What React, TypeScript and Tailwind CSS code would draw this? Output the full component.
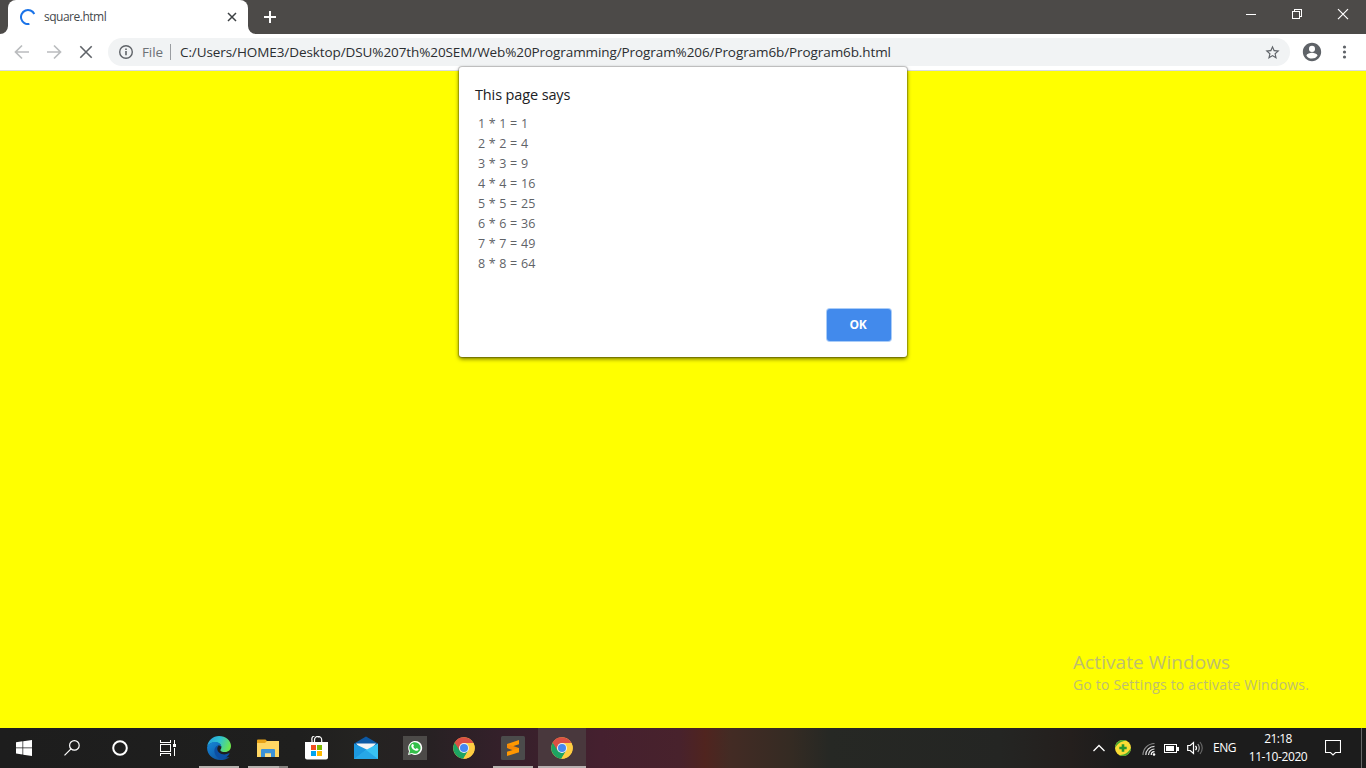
import React from "react";

const rows = ["1 * 1 = 1", "2 * 2 = 4", "3 * 3 = 9", "4 * 4 = 16", "5 * 5 = 25", "6 * 6 = 36", "7 * 7 = 49", "8 * 8 = 64"];

function TabStrip() {
  return (
    <div className="flex h-[34px] shrink-0 items-stretch bg-[#4c4a48]">
      <svg width="8" height="34" className="shrink-0"><path d="M8 26v8H0a8 8 0 0 0 8-8z" fill="#fff" /></svg>
      <div className="flex w-[240px] items-center rounded-t-lg bg-white pr-[11px] pl-[12px]">
        <svg width="16" height="16" viewBox="0 0 16 16" fill="none" stroke="#1a73e8" strokeWidth="2">
          <path d="M14.3 5A7 7 0 1 0 9.4 14.9" />
        </svg>
        <span className="ml-2 text-[12px] leading-4 tracking-[-0.5px] text-[#45494d]">square.html</span>
        <svg width="10" height="10" viewBox="0 0 10 10" className="ml-auto" stroke="#3c4043" strokeWidth="1.5"><path d="M1 1l8 8M9 1l-8 8" /></svg>
      </div>
      <svg width="8" height="34" className="shrink-0"><path d="M0 26v8h8a8 8 0 0 1-8-8z" fill="#fff" /></svg>
      <svg width="28" height="34" stroke="#fff" strokeWidth="2"><path d="M8 17h12M14 11v12" /></svg>
      <div className="ml-auto flex">
        <svg width="46" height="29" shapeRendering="crispEdges"><path d="M18 14h10v1H18z" fill="#fff" /></svg>
        <svg width="46" height="29" fill="none" stroke="#fff" shapeRendering="crispEdges"><path d="M18.5 11.500h7v7h-7zM20.500 11.500v-2h7v7h-2" /></svg>
        <svg width="46" height="29" stroke="#fff" strokeWidth="1.2"><path d="M18 9.200l10 10M28 9.200l-10 10" /></svg>
      </div>
    </div>
  );
}

function Toolbar() {
  return (
    <div className="flex h-[37px] shrink-0 items-center border-b border-[#d9dbdf] bg-white pl-[12px]">
      <svg width="20" height="20" viewBox="0 0 20 20" fill="none" stroke="#babcbe" strokeWidth="1.700"><path d="M17 10H4M10 3.500L3.500 10l6.500 6.500" /></svg>
      <svg width="20" height="20" viewBox="0 0 20 20" fill="none" stroke="#babcbe" strokeWidth="1.700" className="ml-[12px]"><path d="M3 10h13M10 3.500l6.500 6.500-6.500 6.500" /></svg>
      <svg width="20" height="20" viewBox="0 0 20 20" fill="none" stroke="#5f6368" strokeWidth="1.600" className="ml-[12px]"><path d="M4.300 4.300l11.400 11.400M15.700 4.300L4.300 15.700" /></svg>
      <div className="ml-[12px] flex h-7 w-[1182px] items-center rounded-full bg-[#f1f3f4] pl-[10px]">
        <svg width="16" height="16" viewBox="0 0 16 16" fill="none" stroke="#5f6368"><circle cx="8" cy="8" r="6.300" strokeWidth="1.400" /><path d="M8 7v4.200M8 4.500v1.500" strokeWidth="1.600" /></svg>
        <span className="ml-2 w-[21px] text-[13.5px] leading-5 tracking-[-0.1px] whitespace-nowrap text-[#6d7176]">File</span>
        <span className="ml-[7px] h-4 w-px bg-[#9a9da1]" />
        <span className="ml-[9px] text-[13.5px] leading-5 tracking-[-0.088px] whitespace-nowrap text-[#2b2e31]">C:/Users/HOME3/Desktop/DSU%207th%20SEM/Web%20Programming/Program%206/Program6b/Program6b.html</span>
        <svg width="17" height="17" viewBox="0 0 24 24" className="mr-[9.5px] ml-auto" fill="#5f6368"><path d="M22 9.240l-7.190-.62L12 2 9.190 8.630 2 9.240l5.460 4.730L5.820 21 12 17.270 18.180 21l-1.630-7.030L22 9.240zM12 15.400l-3.760 2.270 1-4.280-3.320-2.880 4.380-.38L12 6.100l1.710 4.040 4.380.38-3.320 2.880 1 4.280L12 15.400z" /></svg>
      </div>
      <svg width="22" height="22" viewBox="0 0 24 24" className="ml-[11px]" fill="#5f6368"><path d="M12 2C6.480 2 2 6.480 2 12s4.480 10 10 10 10-4.480 10-10S17.520 2 12 2zm0 3.300a3.300 3.300 0 1 1 0 6.600 3.300 3.300 0 0 1 0-6.600zm0 13.900c-2.500 0-4.710-1.280-6-3.220.03-1.990 4-3.080 6-3.080 1.990 0 5.970 1.090 6 3.080A7.200 7.200 0 0 1 12 19.200z" /></svg>
      <svg width="16" height="20" className="ml-[13px]" fill="#5f6368"><circle cx="8.500" cy="5" r="1.600" /><circle cx="8.500" cy="10" r="1.600" /><circle cx="8.500" cy="15" r="1.600" /></svg>
    </div>
  );
}

function Chrome() {
  return (
    <svg width="22" height="22" viewBox="0 0 48 48">
      <circle cx="24" cy="24" r="23.500" fill="#ffcd42" />
      <path d="M24 24L3.600 12.300A23.500 23.500 0 0 0 22.500 47.450L33.500 29.500z" fill="#1da462" />
      <path d="M24 13H44.400A23.500 23.500 0 0 1 22.500 47.450L33.500 29.500z" fill="#ffcd42" />
      <path d="M3.600 12.300A23.500 23.500 0 0 1 44.400 13H24L14.500 29.500z" fill="#dc5044" />
      <circle cx="24" cy="24" r="11" fill="#f1f1f1" /><circle cx="24" cy="24" r="8.800" fill="#4688f1" />
    </svg>
  );
}

function Edge() {
  return (
    <svg width="24" height="24" viewBox="0 0 24 24">
      <defs>
        <linearGradient id="sea" x1="0" y1=".2" x2="1" y2=".5"><stop stopColor="#269fdf" /><stop offset=".5" stopColor="#2fc3cf" /><stop offset="1" stopColor="#6ce64d" /></linearGradient>
        <linearGradient id="deep" x1="0" y1="0" x2="1" y2="1"><stop stopColor="#1689d9" /><stop offset="1" stopColor="#0b4590" /></linearGradient>
      </defs>
      <path d="M.2 10.500C1 4.500 6 .1 12 .1c7 0 12 4.700 12 10 0 3.700-2.600 6-6 6-3 0-4.600-1-4.600-1.900 0-.7 1-1.200 1-3.100C14.400 8.500 11.500 6.500 8 6.500 4 6.500 1.300 8.500.2 10.500z" fill="url(#sea)" />
      <path d="M.1 11.300C1 8 4.500 6 8 6c3.700 0 6.400 2 6.400 5-1-1.500-2.400-2-3.600-1.300-2 1.100-2.800 4-1.800 6.800 1.400 3.700 5.500 5.200 9.500 4.700h4c-2.600 2-6.300 2.800-8.800 2.800C5 24-.2 18 .1 11.300z" fill="url(#deep)" />
      <path d="M8.300 11.500c-2.500 4 .4 10 5.200 12 3.700-.3 7-2.100 9-5.700.4-.6-.2-.8-.7-.5-4.800 2.600-11.500.4-11.500-4.500 0-1.500.7-2.500 1.500-3.100-1.600-.2-2.700.5-3.500 1.800z" fill="#0c4fa3" />
    </svg>
  );
}

function Cell({ children, line = false, active = false }: { children: React.ReactNode; line?: boolean; active?: boolean }) {
  return (
    <div className={active ? "flex h-10 w-12 flex-col items-center bg-[#49383d]" : "flex h-10 w-12 flex-col items-center"}>
      <div className="flex h-[38px] items-center pt-[2px]">{children}</div>
      {line && <div className={active ? "h-[2px] w-12 bg-[#b8b1b1]" : "h-[2px] w-10 bg-[#b5b2ae]"} />}
    </div>
  );
}

function Taskbar() {
  return (
    <div className="flex h-10 shrink-0 bg-[linear-gradient(90deg,#1d1d1d_0px,#1f1f1e_300px,#242321_360px,#272123_430px,#34202a_500px,#45202f_600px,#48222c_680px,#50241f_705px,#432b24_730px,#352b23_790px,#262824_830px,#242523_1000px,#241f1d_1070px,#1c1c1c_1120px)]">
      <Cell><svg width="16" height="16" viewBox="0 0 16 16" fill="#fff"><path d="M0 2.300L6.500 1.300v6.200H0zM7.200 1.200L16 0v7.500H7.200zM0 8.300h6.500v6.200L0 13.600zM7.200 8.300H16V16l-8.800-1.300z" /></svg></Cell>
      <Cell><svg width="16" height="16" viewBox="0 0 16 16" fill="none" stroke="#fff" strokeWidth="1.200"><circle cx="10.400" cy="5.400" r="4.800" /><path d="M7 8.900L.5 15.400" /></svg></Cell>
      <Cell><svg width="16" height="16"><circle cx="8" cy="8" r="6.800" fill="none" stroke="#fff" strokeWidth="2" /></svg></Cell>
      <Cell><svg width="16" height="16" fill="none" stroke="#fff" strokeWidth="1" shapeRendering="crispEdges"><path d="M.5 0v2.500h10V0M.5 4.500h10v7H.5zM.5 16v-2.500h10V16M14.500 0v4M14.500 8v8" /><path d="M13 4h3v3h-3z" fill="#fff" stroke="none" /></svg></Cell>
      <div className="ml-[3px] flex gap-px">
        <Cell line><Edge /></Cell>
        <div className="flex h-10 w-12 flex-col">
          <div className="flex h-[38px] items-center justify-center pt-[1px] pr-[1px]">
            <svg width="22" height="18" viewBox="0 0 22 18"><path d="M0 1.500Q0 .5 1 .5h7.500L10 2h11q1 0 1 1v15H0z" fill="#e8a317" /><path d="M0 4h8l2-2h12v16H0z" fill="#ffd663" /><path d="M4 18v-7q0-1 1-1h12q1 0 1 1v7h-4v-3.500H8V18z" fill="#3c92d8" /><path d="M8 14.500h6V18H8z" fill="#ffe08a" /></svg>
          </div>
          <div className="ml-1 flex h-[2px]"><span className="w-[31px] bg-[#b5b2ae]" /><span className="w-[9px] bg-[#858380]" /></div>
        </div>
        <Cell><svg width="24" height="24" viewBox="0 0 24 24"><path d="M7 7V4.300a3.800 3.800 0 0 1 7-2.800M9.500 7V4a3.600 3.600 0 0 1 7.200 0v3" fill="none" stroke="#fff" strokeWidth="1.200" /><path d="M0 6h23v15.500q0 2-2 2H2q-2 0-2-2z" fill="#fff" /><path d="M6 9h5v5H6z" fill="#f25022" /><path d="M12 9h5v5h-5z" fill="#7fba00" /><path d="M6 15h5v5H6z" fill="#00a4ef" /><path d="M12 15h5v5h-5z" fill="#ffb900" /></svg></Cell>
        <Cell><svg width="24" height="24" viewBox="0 0 24 24"><path d="M0 7.500L12 .5l12 7L12 17z" fill="#0c59a4" /><path d="M2 7.500h20L12 18z" fill="#f4f4f4" /><path d="M0 7.500l18 8.500v7H0z" fill="#1c98df" /><path d="M24 7.500V23H1L12 14z" fill="#38c2f4" /><path d="M12 14l12 9H0z" fill="#27a7e7" /></svg></Cell>
        <Cell><svg width="24" height="24" viewBox="0 0 24 24"><path d="M0 0h24v24H0z" fill="#4c4a48" /><path d="M5 19l1-3.800A7 7 0 1 1 8.700 18z" fill="#fff" /><path d="M6.200 17.800l.8-2.700A5.800 5.800 0 1 1 9 17z" fill="#34bf49" /><path d="M9 8.500c.7-.8 1.300-.5 1.600.3l.3 1-.6.9c.5 1.100 1.300 1.900 2.500 2.400l.9-1 1.700.8c.2.100.2.500 0 .9-.5 1-1.700 1.200-2.700.9-2.300-.7-3.900-2.300-4.400-4.300-.1-.7.100-1.400.7-1.900z" fill="#fff" /></svg></Cell>
        <Cell><Chrome /></Cell>
        <Cell line><svg width="24" height="24" viewBox="0 0 24 24"><rect width="24" height="24" rx="1.500" fill="#4b4b4b" /><path d="M18 4v4.200l-12 3.900V8z" fill="#ff9800" /><path d="M6 8l12 4v4.200L6 12.100z" fill="#f58a07" /><path d="M18 12v4.200L6 20v-4.200z" fill="#ff9800" /></svg></Cell>
        <Cell line active><Chrome /></Cell>
      </div>
      <div className="ml-auto flex items-center text-[12px] text-white">
        <svg width="12" height="8" fill="none" stroke="#fff" strokeWidth="1.300"><path d="M.5 7L6 1.500 11.500 7" /></svg>
        <svg width="16" height="16" viewBox="0 0 16 16" className="ml-[10px]"><circle cx="8" cy="8" r="8" fill="#f9dc34" /><path d="M0 8a8 8 0 0 1 12-6.900C7 .5 3 3 0 8zM16 8a8 8 0 0 1-12 6.900C9 15.500 13 13 16 8z" fill="#43a532" /><path d="M6.700 4.300h2.600v2.400h2.400v2.600H9.300v2.400H6.700V9.300H4.300V6.700h2.400z" fill="#27952f" /></svg>
        <svg width="14" height="14" viewBox="0 0 14 14" className="mt-[2px] ml-[11px]" fill="none" strokeWidth="1.200"><path d="M1 13A11.500 11.500 0 0 1 12.500 1.500" stroke="#888" /><path d="M3.800 13a8.700 8.700 0 0 1 8.700-8.700M6.500 13a6 6 0 0 1 6-6" stroke="#ddd" /><path d="M9.200 13a3.300 3.300 0 0 1 3.300-3.300" stroke="#fff" /><circle cx="12" cy="12.500" r="1.300" fill="#fff" /></svg>
        <svg width="16" height="10" className="mt-[2px] ml-[8px]" shapeRendering="crispEdges"><path d="M.5 .5h12v8H.5z" fill="none" stroke="#fff" /><path d="M2 2h8v5H2zM13 3h2v4h-2z" fill="#fff" /></svg>
        <svg width="17" height="14" viewBox="0 0 17 14" className="ml-[7px]" fill="none" strokeWidth="1.200"><path d="M.7 4.500h2.500L6.500 1.500v11L3.200 9.500H.7z" stroke="#fff" /><path d="M8.500 4.800q2 2.200 0 4.400" stroke="#fff" /><path d="M10.800 3q3 4 0 8" stroke="#aaa" /><path d="M13 1q4.500 6 0 12" stroke="#666" /></svg>
        <span className="ml-[9px] w-[23px] tracking-[-0.5px] whitespace-nowrap">ENG</span>
        <div className="ml-[12px] flex w-[60px] flex-col items-center text-[12px] leading-[18px] whitespace-nowrap"><span className="tracking-[-0.6px]">21:18</span><span className="tracking-[-0.4px]">11-10-2020</span></div>
        <svg width="16" height="16" className="ml-[17px]" fill="none" stroke="#fff" strokeWidth="1.100"><path d="M.5 .5h15v12H10.500L8 15l-2.500-2.500H.5z" /></svg>
        <span className="mr-[4px] ml-[20px] h-10 w-px bg-[#686868]" />
      </div>
    </div>
  );
}

export default function App() {
  return (
    <div className="relative flex h-[768px] w-[1366px] flex-col overflow-hidden bg-white font-['Open_Sans','Noto_Sans',sans-serif]">
      <TabStrip />
      <Toolbar />
      <main className="flex flex-1 items-end justify-end bg-[#ffff00]">
        <div className="mb-[33px] w-[293px] whitespace-nowrap text-[#bebe70]">
          <p className="text-[19px] leading-[25px] tracking-[0.08px]">Activate Windows</p>
          <p className="text-[14px] leading-[20px] tracking-[0.19px]">Go to Settings to activate Windows.</p>
        </div>
      </main>
      <Taskbar />
      <div role="dialog" className="absolute top-[67px] left-[459px] flex h-[290px] w-[448px] flex-col rounded-[3px] bg-white px-4 pt-[17px] pb-4 shadow-[0_0_1px_1px_rgba(0,0,0,0.22),0_2px_4px_rgba(0,0,0,0.55)]">
        <h1 className="text-[14.5px] leading-[22px] tracking-[-0.13px] text-[#202124]">This page says</h1>
        <div className="mt-[8px] pl-[3px] text-[12.5px] leading-5 tracking-[0.2px] text-[#5f6368]">
          {rows.map((row) => <p key={row}>{row}</p>)}
        </div>
        <button className="mt-auto flex h-8 w-16 items-center justify-center self-end rounded-[3px] bg-[#428aec] pr-[2px] text-[12px] font-bold tracking-[-0.3px] text-white shadow-[0_0_0_1px_#a9ccf8]">OK</button>
      </div>
    </div>
  );
}
